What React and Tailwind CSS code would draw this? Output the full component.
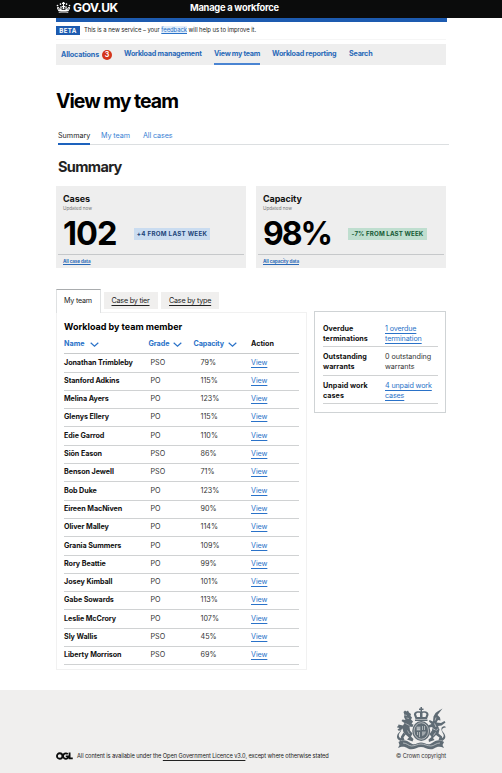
import React from "react";

const members = [
  ["Jonathan Trimbleby", "PSO", "79%"],
  ["Stanford Adkins", "PO", "115%"],
  ["Melina Ayers", "PO", "123%"],
  ["Glenys Ellery", "PO", "115%"],
  ["Edie Garrod", "PO", "110%"],
  ["Siôn Eason", "PSO", "86%"],
  ["Benson Jewell", "PSO", "71%"],
  ["Bob Duke", "PO", "123%"],
  ["Eireen MacNiven", "PO", "90%"],
  ["Oliver Malley", "PO", "114%"],
  ["Grania Summers", "PO", "109%"],
  ["Rory Beattie", "PO", "99%"],
  ["Josey Kimball", "PO", "101%"],
  ["Gabe Sowards", "PO", "113%"],
  ["Leslie McCrory", "PO", "107%"],
  ["Sly Wallis", "PSO", "45%"],
  ["Liberty Morrison", "PSO", "69%"],
];

function Crown() {
  return (
    <svg className="mt-[2px] h-[11px] w-[15px] shrink-0" viewBox="0 0 30 22" fill="#fff">
      <circle cx="9" cy="4.200" r="1.700" />
      <circle cx="21" cy="4.200" r="1.700" />
      <circle cx="3" cy="7" r="1.700" />
      <circle cx="27" cy="7" r="1.700" />
      <path d="M13.800 0h2.400v1.600H18V4h-1.800v4.500l2.300-.8v3l-2.300-.7.8 4.500h-4l.8-4.500-2.300.7v-3l2.300.8V4H12V1.600h1.800z" />
      <path d="M5 18.500 2 12.500c-.6-2 2-3.500 3.500-2s1 3 3.500 4l-.5-6 3 1-1 5 2 1.500h5l2-1.500-1-5 3-1-.5 6c2.500-1 2-2.500 3.500-4s4.100 0 3.500 2l-3 6z" />
      <path d="M5.500 19.800c6-1.200 13-1.200 19 0v1.900c-6-1-13-1-19 0z" />
      <path d="M4.500 12.500 6.500 16M25.500 12.500 23.500 16" stroke="#0b0c0c" strokeWidth="1.200" />
    </svg>
  );
}

function Chevron() {
  return (
    <svg className="h-[5px] w-[9px]" viewBox="0 0 9 5" fill="none" stroke="#2a72c8" strokeWidth="1.2">
      <path d="M0.700 0.700 4.500 4.100 8.300 0.700" />
    </svg>
  );
}

function Crest() {
  return (
    <svg className="h-[43px] w-[50px]" viewBox="0 0 100 86" fill="#5f6b74">
      {/* crown */}
      <path d="M49 0h3v3h3v3h-3v3c7-2 14 1 13 7l-3 8H39l-3-8c-1-6 6-9 13-7V6h-3V3h3z" />
      <path d="M40 14c2-3 5-3 8-2v8h-6zM61 14c-2-3-5-3-8-2v8h6z" fill="#f0efee" />
      <path d="M38 25h25v3H38z" />
      {/* shield within the garter */}
      <ellipse cx="50.500" cy="48" rx="18" ry="20" />
      <ellipse cx="50.500" cy="48" rx="14.500" ry="16.500" fill="none" stroke="#f0efee" strokeWidth="1.200" />
      <path d="M41 39h8v8h-8zM52 49h8c-1 5-4 8-8 9z" fill="#a0a7ac" />
      <path d="M53 38v8M57 38v8M43 50v6M47 50v10M42 42h6M42 45h6" stroke="#c9cdcf" strokeWidth="1.500" />
      {/* lion */}
      <path d="M15 10l3-3 3 2 3-2 2 4 4 3-1 4 3 3-2 4 4 4-3 5 4 1-2 5-6-1 1 8 5 6-3 6 5 5-2 5-11-4 4-4-7-6-4 6 2 5-8 1 1-8 5-8-2-8-7 5-3-3 6-4-5-2 1-4 9 2 3-5-6-4 2-3 6 1-3-6 1-4z" />
      <path d="M9 68C-2 64 2 54 7 50S7 40 2 41c1-5 10-3 9 4-1 6-7 8-5 14 1 3 4 4 7 4z" />
      <path d="M18 16l4 1M21 22l5 1M19 33l8 4M23 47l4 7M13 49l4 4" stroke="#d8dadb" strokeWidth="1.100" />
      {/* unicorn */}
      <path d="M93 3 83 16l5 5 1 6-5-1-3 5 9 1 7-4 2 3-8 6-7 1 3 7-2 8 7 6 1 8-8-1 2-5-7-5-6 6 3 4-11 4-1-5 6-5-4-6 5-7 1-7-7 1-2-4 7-3-5-5 1-3 7 3 1-10 4-7 4-3z" />
      <path d="M92 68c10-5 7-13 2-18s1-10 6-9c-2-5-11-2-9 5 1 6 6 8 4 13-1 3-4 4-6 4z" />
      <path d="M80 21l-2 6M77 33l3 7M73 43l6 3M79 51l-4 6M84 43l-3 4" stroke="#f0efee" strokeWidth="1.200" />
      {/* motto scroll */}
      <path d="M5 70c8-6 17-4 24 2 8 6 14-1 21-1s14 7 22 1c7-6 16-8 24-2l-3 6 3 6c-8-4-14-3-20 1-10 5-17-3-26-3s-16 8-26 3c-6-4-12-5-20-1l3-6z" />
      <path d="M14 72c8 0 11 6 17 6 7 0 12-4 19-4s13 4 20 4c6 0 10-6 18-6" fill="none" stroke="#c9cdcf" strokeWidth="1.500" />
    </svg>
  );
}

const updated = "Updated now";

function StatCard({ title, value, tag, link, tagClass, valueClass }) {
  return (
    <section className="flex h-[82px] w-[190px] flex-col bg-[#eeeeee] px-[2px] pt-[7px]">
      <h3 className="h-[11px] pl-[5px] text-[9px] leading-[11px] font-bold tracking-[-0.01em] text-[#111]">{title}</h3>
      <p className="h-[9px] pl-[5px] pt-[1px] text-[4.600px] leading-[8px] text-[#777]">{updated}</p>
      <div className="flex h-[41px] items-center pl-[5px]">
        <span className={valueClass}>{value}</span>
        <span className={tagClass}>{tag}</span>
      </div>
      <div className="h-[13px] border-t border-[#c6c8ca] pt-[3px] pl-[5px] leading-[8px]">
        <a className="block text-[4.600px] font-bold tracking-[-0.02em] text-[#2a6ab8] underline decoration-[0.600px]">{link}</a>
      </div>
    </section>
  );
}

function SideRow({ label, children, link }) {
  return (
    <div className="flex h-[28.400px] border-b border-[#d0d2d3] text-[7.200px] leading-[10px]">
      <div className="w-[62px] pt-[5px] font-bold tracking-[0.005em] text-[#111]">{label}</div>
      <div className={link ? "pt-[5px] tracking-[-0.020em] text-[#2a72c8] underline decoration-[0.700px] underline-offset-[1.500px]" : "pt-[5px] tracking-[-0.005em] text-[#333]"}>
        {children}
      </div>
    </div>
  );
}

export default function App() {
  return (
    <div className="flex h-[773px] w-[502px] flex-col overflow-hidden bg-white font-['Inter','Liberation_Sans',sans-serif] whitespace-nowrap text-[#111]">
      <header className="flex h-[18px] items-start bg-[#0b0c0c] pl-[56px] text-white">
        <Crown />
        <span className="ml-[2px] w-[117px] text-[12px] leading-[16px] font-bold tracking-[-0.030em]">GOV.UK</span>
        <span className="text-[9.300px] leading-[16px] font-bold tracking-[-0.025em]">Manage a workforce</span>
      </header>

      <div className="ml-[56px] h-[4px] w-[391px] bg-[#1d5bb0]" />

      <div className="ml-[56px] flex h-[18px] w-[390px] items-center border-b border-[#f6f6f6]">
        <span className="flex h-[9px] w-[24px] items-center justify-center bg-[#1d5bb0] text-[6.200px] font-bold tracking-[0.050em] text-white">BETA</span>
        <span className="ml-[4px] text-[5.900px] tracking-[-0.008em] text-[#222]">
          This is a new service – your <a className="bg-[#e2eefb] text-[#2a72c8] underline decoration-[0.600px]">feedback</a> will help us to improve it.
        </span>
      </div>

      <nav className="mt-[4px] ml-[56px] flex h-[21px] w-[390px] bg-[#eeeeee] pl-[5px] text-[7.200px] leading-[20px] font-bold tracking-[-0.020em] text-[#2a6ab8]">
        <a className="flex w-[63px] items-center">
          Allocations
          <span className="ml-[3px] flex size-[10px] items-center justify-center rounded-full bg-[#d4351c] text-[7px] leading-none text-white">3</span>
        </a>
        <a className="w-[90px] tracking-[-0.030em]">Workload management</a>
        <a className="h-[21px] w-[46px] border-b-2 border-[#4a84d2] tracking-[-0.040em]">View my team</a>
        <a className="ml-[12px] w-[77px] tracking-[-0.030em]">Workload reporting</a>
        <a className="tracking-[-0.030em]">Search</a>
      </nav>

      <main className="flex h-[625px] flex-col pl-[56px]">
        <h1 className="mt-[23px] h-[26px] text-[19.500px] leading-[26px] font-bold tracking-[-0.052em] text-black">View my team</h1>

        <div className="mt-[15px] ml-[2px] flex h-[16px] w-[391px] border-b border-[#dcdfe1] text-[7.200px] leading-[13px] text-[#3a7fd4]">
          <a className="h-[16px] w-[32px] border-b-2 border-[#1d62bd] text-[#222]">Summary</a>
          <a className="ml-[11px] w-[42px] tracking-[-0.010em]">My team</a>
          <a className="tracking-[-0.015em]">All cases</a>
        </div>

        <h2 className="mt-[12px] ml-[2px] h-[20px] text-[14.500px] leading-[20px] font-bold tracking-[-0.045em] text-[#222]">Summary</h2>

        <div className="mt-[9px] flex gap-[10px]">
          <StatCard
            title="Cases"
            value="102"
            tag="+4 FROM LAST WEEK"
            link="All case data"
            valueClass="w-[71px] text-[32.500px] leading-[41px] font-bold tracking-[-0.030em] text-black"
            tagClass="flex h-[12px] w-[76px] items-center justify-center bg-[#cadcf0] text-[6.200px] font-bold tracking-[0.045em] text-[#1c4478]"
          />
          <StatCard
            title="Capacity"
            value="98%"
            tag="-7% FROM LAST WEEK"
            link="All capacity data"
            valueClass="w-[85px] text-[32px] leading-[41px] font-bold tracking-[-0.065em] text-black"
            tagClass="flex h-[12px] w-[79px] items-center justify-center bg-[#bfdecf] text-[6.200px] font-bold tracking-[0.018em] text-[#155a35]"
          />
        </div>

        <div className="mt-[21px] flex items-start">
          <div className="flex w-[251px] flex-col">
            <div className="flex h-[23px] items-start text-[7.200px] tracking-[-0.030em] text-[#222]">
              <a className="z-10 h-[24px] w-[45px] border-x border-t border-x-[#dfe1e2] border-t-[#a9acae] bg-white pl-[7px] leading-[21px]">My team</a>
              <a className="mt-[3px] ml-[3px] h-[17px] w-[54px] bg-[#f0efee] pl-[7.500px] leading-[17px] underline decoration-[0.700px] underline-offset-[1.500px]">Case by tier</a>
              <a className="mt-[3px] ml-[3px] h-[17px] w-[58px] bg-[#f0efee] pl-[8px] leading-[17px] underline decoration-[0.700px] underline-offset-[1.500px]">Case by type</a>
            </div>
            <section className="h-[358px] border border-[#f1f1f1] pt-[7px] pl-[7px]">
              <h3 className="h-[13px] text-[9px] leading-[13px] font-bold text-black">Workload by team member</h3>
              <div className="mt-[2px] flex h-[19.300px] w-[235px] items-center border-b border-[#c8cacb] text-[7.200px] font-bold text-[#2a72c8]">
                <span className="flex w-[84.500px] items-center gap-[5px]">Name<Chevron /></span>
                <span className="flex w-[45px] items-center gap-[4px] tracking-[-0.010em]">Grade<Chevron /></span>
                <span className="flex w-[57.500px] items-center gap-[4.500px] tracking-[-0.020em]">Capacity<Chevron /></span>
                <span className="text-[#111]">Action</span>
              </div>
              {members.map(([name, grade, capacity]) => (
                <div key={name} className="flex h-[18.300px] w-[235px] items-center border-b border-[#d0d2d3] text-[7.200px] text-[#333]">
                  <span className="w-[86.500px] font-bold tracking-[-0.010em] text-[#111]">{name}</span>
                  <span className="w-[50px]">{grade}</span>
                  <span className="w-[50.500px]">{capacity}</span>
                  <a className="tracking-[-0.010em] text-[#2a72c8] underline decoration-[0.700px] underline-offset-[1.500px]">View</a>
                </div>
              ))}
            </section>
          </div>

          <aside className="mt-[22px] ml-[7px] h-[102px] w-[132px] border border-[#cfd3d5] pt-[7px] pl-[8px]">
            <div className="w-[115px]">
              <SideRow label={<>Overdue<br />terminations</>} link>1 overdue<br />termination</SideRow>
              <SideRow label={<>Outstanding<br />warrants</>}>0 outstanding<br />warrants</SideRow>
              <SideRow label={<>Unpaid work<br />cases</>} link>4 unpaid work<br />cases</SideRow>
            </div>
          </aside>
        </div>
      </main>

      <footer className="flex h-[83px] items-end justify-between bg-[#f0efee] pr-[56px] pb-[12px] pl-[56px]">
        <div className="flex items-center">
          <svg className="h-[8px] w-[17px]" viewBox="0 0 34 16" fill="none" stroke="#0b0c0c" strokeWidth="3.600">
            <circle cx="7.400" cy="8" r="5.500" />
            <path d="M23.600 4.200A5.500 5.500 0 1 0 24 11.600V8.600H19.500M27.200 1v11.800h6.300" />
          </svg>
          <span className="ml-[4px] text-[5.700px] leading-[10px] tracking-[-0.015em] text-[#222]">
            All content is available under the <a className="underline decoration-[0.600px] underline-offset-[1.500px]">Open Government Licence v3.0</a>, except where otherwise stated
          </span>
        </div>
        <div className="flex w-[50px] flex-col items-center">
          <Crest />
          <span className="mt-[1px] text-[5.700px] leading-[10px] tracking-[-0.015em] text-[#333]">© Crown copyright</span>
        </div>
      </footer>
    </div>
  );
}
